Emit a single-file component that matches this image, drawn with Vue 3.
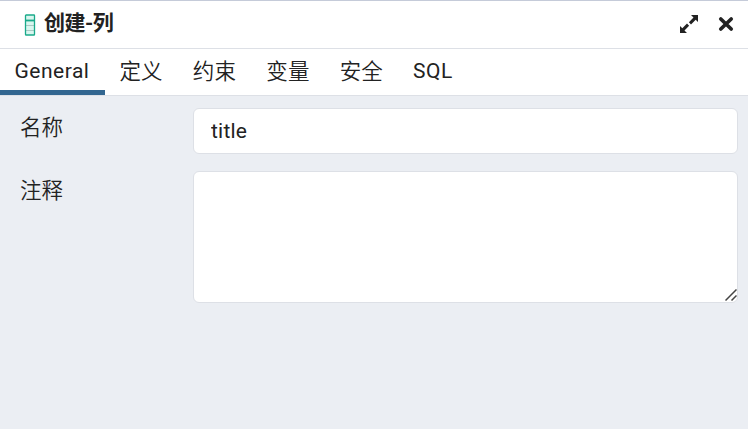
<script setup>
import { ref } from 'vue'

const tabs = ['General', '定义', '约束', '变量', '安全', 'SQL']
const active = ref('General')
const name = ref('title')
const comment = ref('')
</script>

<template>
  <section class="dialog">
    <header class="header">
      <svg class="column-icon" width="12" height="23" viewBox="0 0 12 23">
        <rect x="1.500" y="1" width="9" height="20" rx="0.6" fill="#d9f6ef" />
        <path d="M1.500 11.500h9M1.500 16.500h9" stroke="#a9c9c3" stroke-width="1.2" />
        <rect x="1.500" y="1" width="9" height="20" rx="0.6" fill="none" stroke="#1aaa8a" stroke-width="1.3" />
        <path d="M1.500 6.500h9" stroke="#1aaa8a" stroke-width="1.800" />
      </svg>
      <h1 class="title">创建-列</h1>
      <button class="tool" aria-label="最大化">
        <svg width="20" height="20" viewBox="0 0 20 20">
          <path d="M12 1H19v7l-2.300-2.300-4.700 4.700-2.100-2.100 4.600-4.700zM8 19H1v-7l2.300 2.300 4.700-4.700 2.100 2.100-4.600 4.700z" fill="#222" />
        </svg>
      </button>
      <button class="tool" aria-label="关闭">
        <svg width="16" height="16" viewBox="0 0 16 16">
          <path d="M2.800 3l10.400 10M13.200 3L2.800 13" stroke="#222" stroke-width="3.7" stroke-linecap="round" />
        </svg>
      </button>
    </header>
    <nav class="tabs">
      <button
        v-for="tab in tabs"
        :key="tab"
        class="tab"
        :class="{ active: tab === active }"
        @click="active = tab"
      >{{ tab }}</button>
    </nav>
    <main class="form">
      <label class="label" for="name">名称</label>
      <input id="name" v-model="name" class="field input" />
      <label class="label" for="comment">注释</label>
      <div class="area">
        <textarea id="comment" v-model="comment" class="field textarea"></textarea>
        <svg class="grip" width="12" height="12" viewBox="0 0 12 12">
          <path d="M.5 11.500L11.500.500M6.500 11.500l5-5" stroke="#444" stroke-width="1.500" />
        </svg>
      </div>
    </main>
  </section>
</template>

<style>
body { margin: 0; }
</style>

<style scoped>
.dialog {
  box-sizing: border-box;
  display: flex;
  flex-direction: column;
  height: 429px;
  border-top: 1px solid #c5cbd9;
  background: #ebeef3;
  color: #222;
  font-family: Roboto, "Noto Sans CJK SC", sans-serif;
  font-size: 21px;
}
.header {
  box-sizing: border-box;
  display: flex;
  align-items: center;
  height: 48px;
  padding: 0 14px 2px 24px;
  border-bottom: 1px solid #dde0e6;
  background: #fff;
}
.column-icon { margin: 3px 8px 0 0; }
.title {
  flex: 1;
  margin: 0;
  padding-bottom: 2px;
  font-size: 21px;
  font-weight: 700;
  line-height: 30px;
  letter-spacing: -0.5px;
}
.tool {
  display: flex;
  padding: 0;
  border: 0;
  background: none;
}
.tool + .tool { margin-left: 19px; }
.tabs {
  box-sizing: border-box;
  display: flex;
  height: 47px;
  border-bottom: 1px solid #dde0e6;
  background: #fff;
}
.tab {
  box-sizing: border-box;
  height: 46px;
  padding: 0 15px 2px;
  border: 0;
  background: none;
  color: inherit;
  font: 350 21.500px/41px Roboto, "Noto Sans CJK SC", sans-serif;
  letter-spacing: 0.2px;
}
.tab:first-child, .tab:last-child {
  font-size: 21px;
  font-weight: 400;
  letter-spacing: 0.5px;
}
.tab:first-child {
  width: 105px;
  margin-right: -0.6px;
  padding: 0 0 2px 14.500px;
  text-align: left;
}
.active { box-shadow: inset 0 -5px #326690; }
.form {
  display: grid;
  grid-template-columns: 173px 545px;
  grid-template-rows: 46px 132px;
  row-gap: 17px;
  padding: 12px 10px 0 20px;
}
.label {
  font-size: 21.500px;
  font-weight: 350;
  line-height: 30px;
  padding-top: 5px;
}
.field {
  box-sizing: border-box;
  display: block;
  width: 100%;
  height: 100%;
  border: 1px solid #dde0e6;
  border-radius: 6px;
  outline: 0;
  background: #fff;
  color: #222;
  font: 400 21px/30px Roboto, "Noto Sans CJK SC", sans-serif;
  letter-spacing: 0.2px;
}
.input { padding: 0 17px; }
.area { position: relative; }
.textarea { padding: 8px 17px; resize: none; }
.grip { position: absolute; right: 1px; bottom: 2px; }
</style>
